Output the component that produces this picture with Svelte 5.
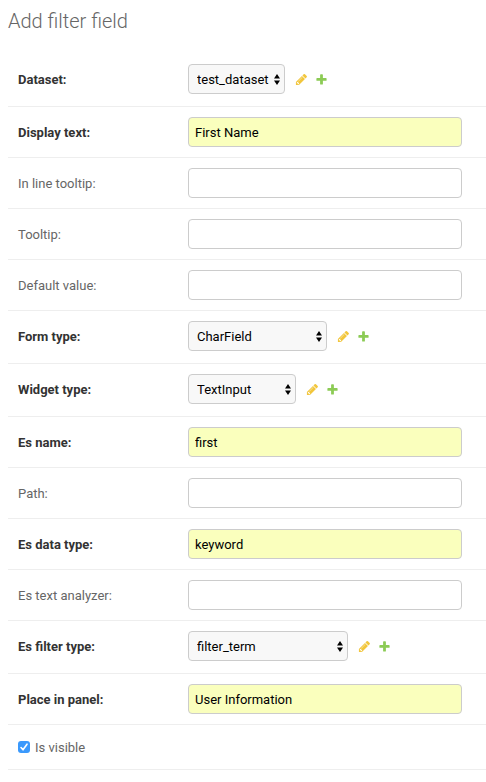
<script>
  const rows = [
    { id: 'dataset', label: 'Dataset', required: true, type: 'select', value: 'test_dataset', width: 97 },
    { id: 'display_text', label: 'Display text', required: true, value: 'First Name' },
    { id: 'in_line_tooltip', label: 'In line tooltip', value: '' },
    { id: 'tooltip', label: 'Tooltip', value: '' },
    { id: 'default_value', label: 'Default value', value: '' },
    { id: 'form_type', label: 'Form type', required: true, type: 'select', value: 'CharField', width: 139 },
    { id: 'widget_type', label: 'Widget type', required: true, type: 'select', value: 'TextInput', width: 108 },
    { id: 'es_name', label: 'Es name', required: true, value: 'first' },
    { id: 'path', label: 'Path', value: '' },
    { id: 'es_data_type', label: 'Es data type', required: true, value: 'keyword' },
    { id: 'es_text_analyzer', label: 'Es text analyzer', value: '' },
    { id: 'es_filter_type', label: 'Es filter type', required: true, type: 'select', value: 'filter_term', width: 160 },
    { id: 'place_in_panel', label: 'Place in panel', required: true, value: 'User Information' }
  ];
</script>

<main>
  <h1>Add filter field</h1>
  <form>
    {#each rows as row (row.id)}
      <div class="row" class:related={row.type === 'select'}>
        <label for={row.id} class:required={row.required}>{row.label}:</label>
        {#if row.type === 'select'}
          <div class="select" style="width: {row.width}px">
            <select id={row.id}>
              <option>{row.value}</option>
            </select>
            <svg class="arrows" viewBox="0 0 6 11" aria-hidden="true">
              <path d="M3 0L6 4.6H0zM3 11L0 6.4h6z" />
            </svg>
          </div>
          <a class="change" href="#change" aria-label="Change selected {row.label}">
            <svg viewBox="0 0 1792 1792" aria-hidden="true">
              <path d="M491 1536l91-91-235-235-91 91v107h128v128h107zm523-928q0-22-22-22-10 0-17 7l-542 542q-7 7-7 17 0 22 22 22 10 0 17-7l542-542q7-7 7-17zm-54-192l416 416-832 832h-416v-416zm683 96q0 53-37 90l-166 166-416-416 166-165q36-38 90-38 53 0 91 38l235 234q37 39 37 91z" />
            </svg>
          </a>
          <a class="add" href="#add" aria-label="Add another {row.label}">
            <svg viewBox="0 0 1792 1792" aria-hidden="true">
              <path d="M1600 796v192q0 40-28 68t-68 28h-416v416q0 40-28 68t-68 28h-192q-40 0-68-28t-28-68v-416h-416q-40 0-68-28t-28-68v-192q0-40 28-68t68-28h416v-416q0-40 28-68t68-28h192q40 0 68 28t28 68v416h416q40 0 68 28t28 68z" />
            </svg>
          </a>
        {:else}
          <input id={row.id} type="text" class:filled={row.value} value={row.value} />
        {/if}
      </div>
    {/each}
    <div class="row check">
      <input id="is_visible" type="checkbox" checked />
      <label for="is_visible">Is visible</label>
    </div>
  </form>
</main>

<style>
  :global(body) {
    background: #fff;
  }
  main {
    padding: 8px 0 12px 8px;
    font-family: Roboto, 'Liberation Sans', sans-serif;
    font-size: 13px;
    color: #666;
  }
  h1 {
    margin: 0 0 20px;
    font-size: 20px;
    line-height: 26px;
    font-weight: 300;
  }
  .row {
    display: flex;
    align-items: center;
    padding: 10px;
    border-bottom: 1px solid #eee;
  }
  .related {
    padding-bottom: 12px;
  }
  label {
    flex: 0 0 170px;
    padding-top: 2px;
    line-height: 16px;
  }
  .required {
    font-weight: 700;
    color: #333;
  }
  input[type='text'],
  select {
    box-sizing: border-box;
    height: 30px;
    border: 1px solid #ccc;
    border-radius: 4px;
    font: inherit;
    color: #000;
  }
  input[type='text'] {
    flex: 0 1 274px;
    min-width: 0;
    padding: 0 6px;
    background: #fff;
  }
  input.filled {
    background: #faffbd;
  }
  .select {
    position: relative;
    display: flex;
  }
  select {
    appearance: none;
    width: 100%;
    margin: 0;
    padding: 0 8px;
    background: #f8f8f8;
  }
  .arrows {
    position: absolute;
    top: 10px;
    right: 5px;
    width: 6px;
    height: 11px;
    pointer-events: none;
  }
  a {
    display: flex;
  }
  a svg {
    width: 13px;
    height: 13px;
    opacity: 0.8;
  }
  .change {
    margin-left: 10px;
    fill: #efb80b;
  }
  .add {
    margin-left: 7px;
    fill: #70bf2b;
  }
  .check {
    gap: 5px;
    min-height: 24px;
  }
  .check label {
    flex: none;
  }
  input[type='checkbox'] {
    appearance: none;
    width: 12px;
    height: 12px;
    margin: 0;
    border-radius: 3px;
    background: #3b99fc
      url("data:image/svg+xml,%3Csvg xmlns='http://www.w3.org/2000/svg' viewBox='0 0 12 12'%3E%3Cpath d='M3 6.5L5 8.8 9 3.2' fill='none' stroke='white' stroke-width='1.6' stroke-linecap='round' stroke-linejoin='round'/%3E%3C/svg%3E");
  }
  input[type='checkbox']:not(:checked) {
    background: #fff;
    border: 1px solid #ccc;
  }
</style>
